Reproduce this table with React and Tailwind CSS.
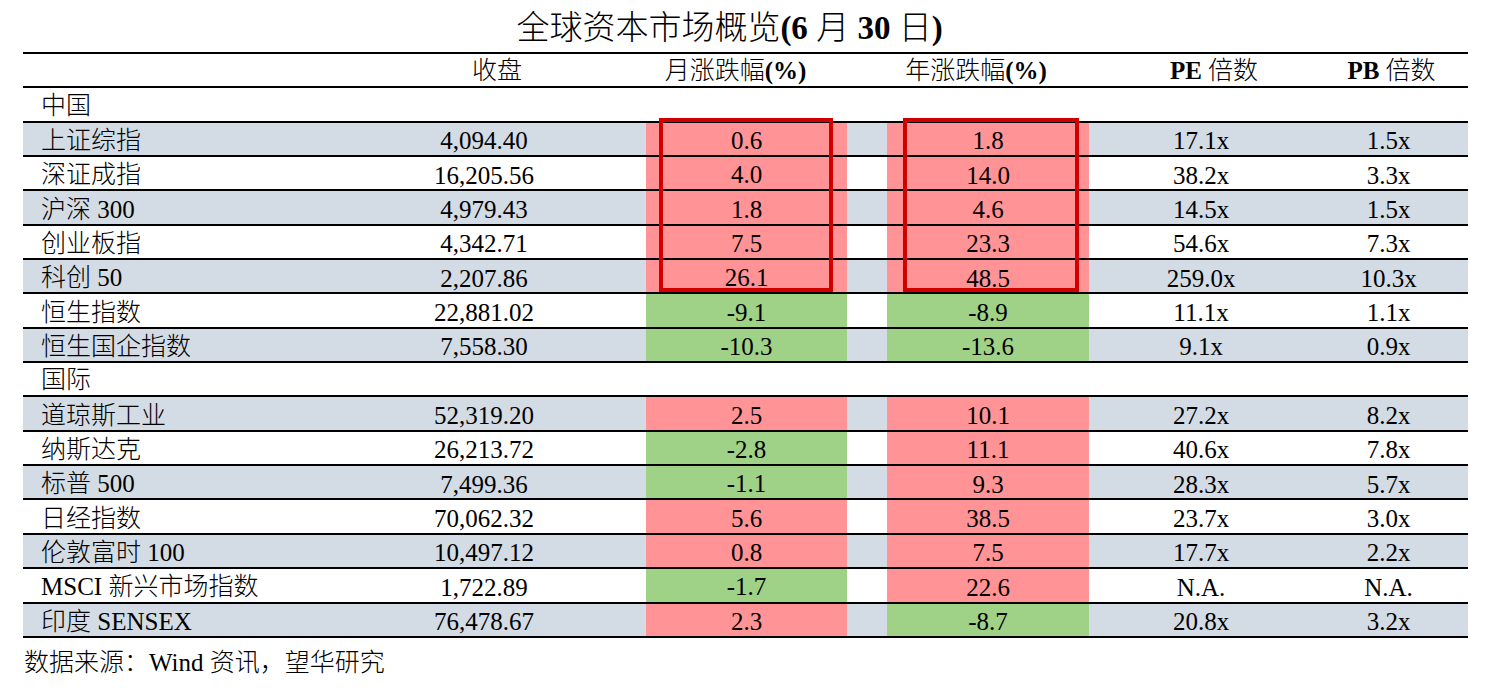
import React from "react";

const R = "bg-[#ff9396]";
const G = "bg-[#9fd287]";

const china = [
  ["上证综指", "4,094.40", "0.6", "r", "1.8", "r", "17.1x", "1.5x"],
  ["深证成指", "16,205.56", "4.0", "r", "14.0", "r", "38.2x", "3.3x"],
  ["沪深 300", "4,979.43", "1.8", "r", "4.6", "r", "14.5x", "1.5x"],
  ["创业板指", "4,342.71", "7.5", "r", "23.3", "r", "54.6x", "7.3x"],
  ["科创 50", "2,207.86", "26.1", "r", "48.5", "r", "259.0x", "10.3x"],
  ["恒生指数", "22,881.02", "-9.1", "g", "-8.9", "g", "11.1x", "1.1x"],
  ["恒生国企指数", "7,558.30", "-10.3", "g", "-13.6", "g", "9.1x", "0.9x"],
];

const intl = [
  ["道琼斯工业", "52,319.20", "2.5", "r", "10.1", "r", "27.2x", "8.2x"],
  ["纳斯达克", "26,213.72", "-2.8", "g", "11.1", "r", "40.6x", "7.8x"],
  ["标普 500", "7,499.36", "-1.1", "g", "9.3", "r", "28.3x", "5.7x"],
  ["日经指数", "70,062.32", "5.6", "r", "38.5", "r", "23.7x", "3.0x"],
  ["伦敦富时 100", "10,497.12", "0.8", "r", "7.5", "r", "17.7x", "2.2x"],
  ["MSCI 新兴市场指数", "1,722.89", "-1.7", "g", "22.6", "r", "N.A.", "N.A."],
  ["印度 SENSEX", "76,478.67", "2.3", "r", "-8.7", "g", "20.8x", "3.2x"],
];

const grid =
  "grid grid-cols-[361px_200px_62px_201px_40px_202px_224px_155px] h-[34.35px] border-b-2 border-black";

function Row({ d, gray }) {
  const [name, close, m, mc, y, yc, pe, pb] = d;
  return (
    <div className={`${grid} ${gray ? "bg-[#d3dbe4]" : "bg-white"}`}>
      <div className="flex items-center pl-[18px] pt-[3px]">{name}</div>
      <div className="flex items-center justify-center pt-[4px]">{close}</div>
      <div />
      <div className={`flex items-center justify-center pt-[3px] ${mc === "r" ? R : G}`}>{m}</div>
      <div />
      <div className={`flex items-center justify-center pt-[4px] ${yc === "r" ? R : G}`}>{y}</div>
      <div className="flex items-center justify-center pt-[4px]">{pe}</div>
      <div className="flex items-center justify-center pt-[4px] pr-[4px]">{pb}</div>
    </div>
  );
}

function Section({ label }) {
  return (
    <div className={`${grid} bg-white`}>
      <div className="flex items-center pl-[18px] pt-[1px]">{label}</div>
    </div>
  );
}

export default function App() {
  return (
    <div
      className="w-[1492px] h-[688px] bg-white text-black text-[25px] leading-none"
      style={{ fontFamily: '"Liberation Serif", "Noto Sans CJK SC", serif' }}
    >
      <div className="h-[52px] flex items-center justify-center pr-[33px] pt-[4px] text-[33px] font-light">
        <span>
          全球资本市场概览<b className="font-bold">(6</b> 月 <b className="font-bold">30</b> 日<b className="font-bold">)</b>
        </span>
      </div>
      <div className="relative ml-[23px] w-[1445px] border-t-2 border-black font-light">
        <div className={`${grid} bg-white`}>
          <div />
          <div className="flex items-center justify-center pl-[26px] pt-[1px]">收盘</div>
          <div />
          <div className="flex items-center justify-center pr-[22px] pt-[1px]">
            <span>
              月涨跌幅<b className="font-bold">(%)</b>
            </span>
          </div>
          <div />
          <div className="flex items-center justify-center pr-[24px] pt-[1px]">
            <span>
              年涨跌幅<b className="font-bold">(%)</b>
            </span>
          </div>
          <div className="flex items-center justify-center pl-[26px] pt-[1px]">
            <span>
              <b className="font-bold">PE</b> 倍数
            </span>
          </div>
          <div className="flex items-center justify-center pl-[2px] pt-[1px]">
            <span>
              <b className="font-bold">PB</b> 倍数
            </span>
          </div>
        </div>
        <Section label="中国" />
        {china.map((d, i) => (
          <Row key={d[0]} d={d} gray={i % 2 === 0} />
        ))}
        <Section label="国际" />
        {intl.map((d, i) => (
          <Row key={d[0]} d={d} gray={i % 2 === 0} />
        ))}
        <div className="absolute left-[636px] top-[64px] w-[174px] h-[174px] border-[4px] border-[#d00000]" />
        <div className="absolute left-[880px] top-[64px] w-[176px] h-[174px] border-[4px] border-[#d00000]" />
      </div>
      <div className="pl-[24px] pt-[12px] text-[25px] font-light">数据来源：Wind 资讯，望华研究</div>
    </div>
  );
}
